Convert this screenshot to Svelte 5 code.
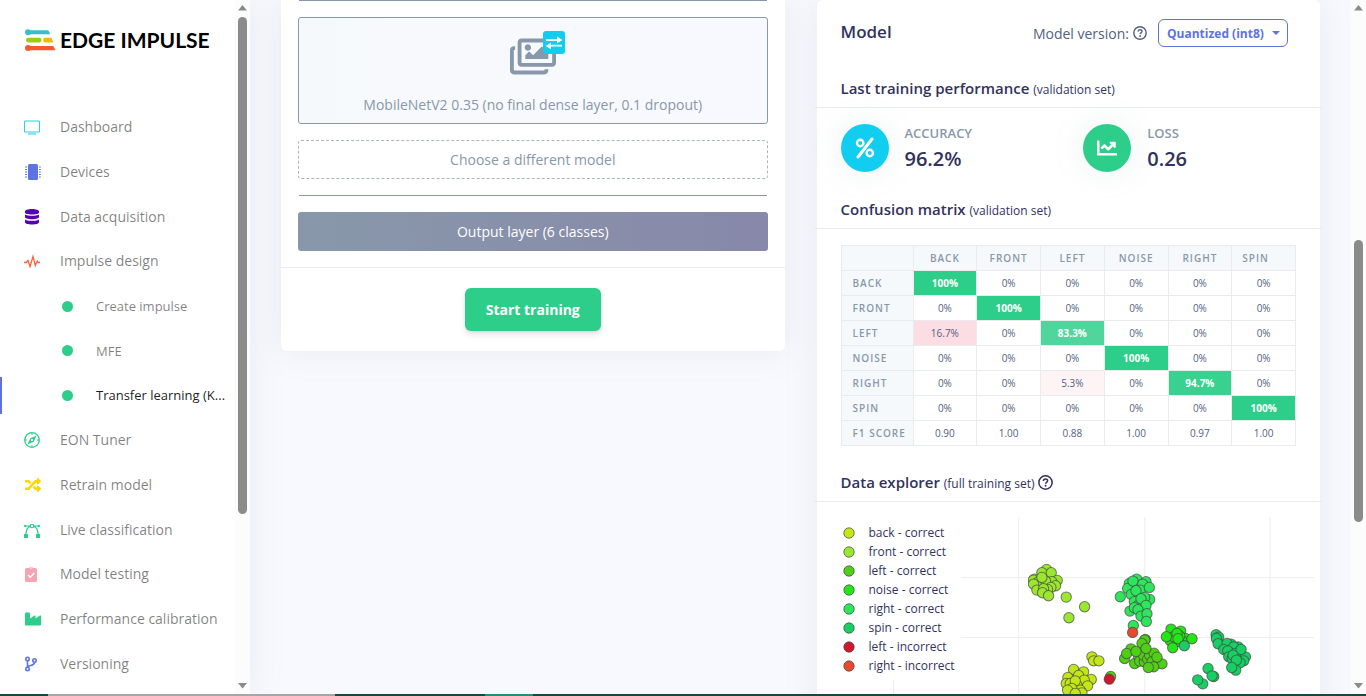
<script>
  const nav = [
    { label: 'Dashboard', icon: 'screen', color: '#2dcef0' },
    { label: 'Devices', icon: 'chip', color: '#5e72e4' },
    { label: 'Data acquisition', icon: 'database', color: '#5603ad' },
    { label: 'Impulse design', icon: 'pulse', color: '#fb6340' },
    { label: 'Create impulse', sub: true },
    { label: 'MFE', sub: true },
    { label: 'Transfer learning (K...', sub: true, active: true },
    { label: 'EON Tuner', icon: 'compass', color: '#2dce89' },
    { label: 'Retrain model', icon: 'shuffle', color: '#ffd600' },
    { label: 'Live classification', icon: 'vector', color: '#2dce89' },
    { label: 'Model testing', icon: 'clipboard', color: '#f3a4b5' },
    { label: 'Performance calibration', icon: 'factory', color: '#2dce89' },
    { label: 'Versioning', icon: 'branch', color: '#5e72e4' }
  ];

  const classes = ['Back', 'Front', 'Left', 'Noise', 'Right', 'Spin'];
  const matrix = [
    [100, 0, 0, 0, 0, 0],
    [0, 100, 0, 0, 0, 0],
    [16.7, 0, 83.3, 0, 0, 0],
    [0, 0, 0, 100, 0, 0],
    [0, 0, 5.3, 0, 94.7, 0],
    [0, 0, 0, 0, 0, 100]
  ];
  const f1 = ['0.90', '1.00', '0.88', '1.00', '0.97', '1.00'];

  function shade(value, hit) {
    if (value === 0) return 'transparent';
    return hit ? `rgba(45, 206, 137, ${value / 100})` : `rgba(245, 54, 92, ${value / 100})`;
  }

  // Point coordinates are in thirds of a chart unit.
  const series = [
    { name: 'back - correct', color: '#c3e617', points: [[245,440],[250,452],[266,452],[190,478],[220,485],[173,502],[205,496],[243,508],[168,520],[180,520],[222,510],[232,527],[200,525],[195,512],[210,540],[185,535],[172,540],[215,548],[195,550]] },
    { name: 'front - correct', color: '#9be62e', points: [[109,178],[95,188],[123,188],[73,207],[70,210],[141,211],[85,215],[125,215],[106,213],[95,202],[136,227],[70,222],[80,240],[122,232],[112,238],[100,236],[97,248],[115,257],[168,261],[223,290],[176,323]] },
    { name: 'left - correct', color: '#50cf17', points: [[405,388],[403,390],[395,400],[362,416],[343,445],[373,460],[385,440],[388,453],[402,455],[400,436],[412,447],[418,435],[431,429],[425,455],[445,458],[455,461],[440,441],[430,470],[414,472],[407,415],[349,430],[377,424],[301,499]] },
    { name: 'noise - correct', color: '#24e617', points: [[482,357],[511,363],[525,385],[480,392],[515,392],[500,395],[490,380],[508,378],[500,370],[468,380],[545,386],[503,386],[487,413]] },
    { name: 'right - correct', color: '#2ee65c', points: [[379,207],[407,215],[357,220],[352,235],[397,222],[368,213],[390,240],[417,232],[363,253],[377,242],[330,260],[418,268],[403,262],[372,275],[385,285],[392,266],[359,303],[372,293],[400,298],[407,286],[383,299],[392,318],[410,311],[408,334],[369,346]] },
    { name: 'spin - correct', color: '#17cf62', points: [[522,407],[617,374],[625,381],[618,385],[623,401],[662,402],[650,400],[640,418],[683,410],[670,410],[652,422],[705,440],[700,452],[675,430],[692,418],[655,440],[665,445],[668,435],[689,458],[676,480],[678,450],[664,472],[593,475],[610,499],[605,497],[577,521],[562,509]] },
    { name: 'left - incorrect', color: '#d0172b', points: [[297,507]] },
    { name: 'right - incorrect', color: '#e64a2e', points: [[367,367]] }
  ];
</script>

{#snippet icon(name)}
  <svg class="icon" viewBox="0 0 16 16" aria-hidden="true" fill="currentColor">
    {#if name === 'screen'}
      <path d="M.5 2h15v11H.5z" fill="none" stroke="currentColor" /><path d="M4 14.4h8v1.1H4z" />
    {:else if name === 'chip'}
      <rect x="4" y="0" width="10" height="16" rx="1.5" />
      <path d="M1 2.5h2v1H1zM1 5h2v1H1zM1 7.5h2v1H1zM1 10h2v1H1zM1 12.5h2v1H1zM15 2.5h1.8v1H15zM15 5h1.8v1H15zM15 7.5h1.8v1H15zM15 10h1.8v1H15zM15 12.5h1.8v1H15z" />
    {:else if name === 'database'}
      <path d="M1 2.3C1 1 4 0 8 0s7 1 7 2.3v1.1C15 4.700 12 5.400 8 5.400S1 4.700 1 3.400zM1 5.400C3 6.600 5.500 6.700 8 6.700s5-.1 7-1.300v2.700c0 1.300-3 2.200-7 2.200S1 9.400 1 8.100zM1 10.400c2 1.200 4.500 1.400 7 1.400s5-.2 7-1.400v2.800C15 14.500 12 15.500 8 15.500S1 14.500 1 13.200z" />
    {:else if name === 'pulse'}
      <path d="M0 9.500h2.500L4 7.500l2 6L9 3.500l2.300 9 2-4.500 1 1.500H16" fill="none" stroke="currentColor" stroke-width="1.300" />
    {:else if name === 'compass'}
      <circle cx="8" cy="8" r="7.300" fill="none" stroke="currentColor" stroke-width="1.300" />
      <path fill-rule="evenodd" d="M12.600 3.400 9.700 9.700 3.400 12.600l2.900-6.300zM8 6.800a1.200 1.200 0 1 0 0 2.400 1.200 1.200 0 0 0 0-2.400z" />
      <path d="M8 1v2M8 13v2M1 8h2M13 8h2" stroke="currentColor" />
    {:else if name === 'shuffle'}
      <g transform="translate(1) scale(.03125)"><path d="M504.971 359.029c9.373 9.373 9.373 24.569 0 33.941l-80 79.984c-15.010 15.010-40.971 4.490-40.971-16.971V416h-58.785a12.004 12.004 0 0 1-8.773-3.812l-70.556-75.596 53.333-57.143L352 336h32v-39.981c0-21.438 25.943-31.998 40.971-16.971l80 79.981zM12 176h84l52.781 56.551 53.333-57.143-70.556-75.596A11.999 11.999 0 0 0 122.785 96H12c-6.627 0-12 5.373-12 12v56c0 6.627 5.373 12 12 12zm372 0v39.984c0 21.460 25.961 31.980 40.971 16.971l80-79.984c9.373-9.373 9.373-24.569 0-33.941l-80-79.981C409.943 24.021 384 34.582 384 56.019V96h-58.785a12.004 12.004 0 0 0-8.773 3.812L96 336H12c-6.627 0-12 5.373-12 12v56c0 6.627 5.373 12 12 12h110.785c3.326 0 6.503-1.381 8.773-3.812L352 176h32z" /></g>
    {:else if name === 'vector'}
      <path d="M0 12h4v4H0zM12 12h4v4h-4z" />
      <path d="M2 12c0-4 2-7 4.500-7.700M14 12c0-4-2-7-4.500-7.700M1 4h5.500M9.500 4H15" fill="none" stroke="currentColor" stroke-width="1.200" />
      <path d="M6.500 2.600h3v3h-3z" fill="#fff" stroke="currentColor" />
      <circle cx="1.200" cy="4" r="1.200" /><circle cx="14.800" cy="4" r="1.200" />
    {:else if name === 'clipboard'}
      <path fill-rule="evenodd" d="M2.500 2H5a2.200 2.200 0 0 1 4 0h2.500A1.500 1.500 0 0 1 13 3.500v11a1.500 1.500 0 0 1-1.500 1.500h-9A1.500 1.500 0 0 1 1 14.500v-11A1.500 1.500 0 0 1 2.500 2zM7 1.200a.8.8 0 1 0 0 1.600.8.8 0 0 0 0-1.600z" />
      <path d="m4 9 2.200 2.200L10.400 7" fill="none" stroke="#fff" stroke-width="1.600" />
    {:else if name === 'factory'}
      <path d="M1 2.500A1 1 0 0 1 2 1.500h3a1 1 0 0 1 1 1v5l4.500-2.900a.6.600 0 0 1 1 .5v2.400L16 4.600a.6.600 0 0 1 1 .5v8.400a1 1 0 0 1-1 1H2a1 1 0 0 1-1-1z" />
    {:else if name === 'branch'}
      <g fill="none" stroke="currentColor" stroke-width="1.600"><circle cx="3.500" cy="3" r="1.700" /><circle cx="3.500" cy="13" r="1.700" /><circle cx="10.500" cy="4.500" r="1.700" /><path d="M3.500 4.700v6.600M10.500 6.200c0 3.600-3.500 2.800-6.800 4.300" /></g>
    {/if}
  </svg>
{/snippet}

{#snippet help()}
  <svg class="help" viewBox="0 0 14 14" role="img" aria-label="Help">
    <circle cx="7" cy="7" r="6.200" fill="none" stroke="currentColor" stroke-width="1.400" />
    <path d="M5 5.600C5.100 4.300 6 3.700 7 3.700c1.200 0 2 .7 2 1.700 0 1.400-1.900 1.400-1.900 2.700" fill="none" stroke="currentColor" stroke-width="1.400" />
    <circle cx="7.100" cy="10" r=".9" fill="currentColor" />
  </svg>
{/snippet}

{#snippet scrollbar(before, thumb, after)}
  <div class="scrollbar" aria-hidden="true">
    <svg viewBox="0 0 9 6"><path d="M4.500 0 9 5.500H0z" /></svg>
    <div class="track">
      <span style="flex-grow: {before}"></span>
      <span class="thumb" style="flex-grow: {thumb}"></span>
      <span style="flex-grow: {after}"></span>
    </div>
    <svg viewBox="0 0 9 6"><path d="M4.500 5.500 9 0H0z" /></svg>
  </div>
{/snippet}

<div class="shell">
  <div class="app">
    <aside>
      <div class="sidebar">
        <a class="brand" href="#home">
          <svg viewBox="0 0 31 23" aria-hidden="true">
            <circle cx="3" cy="3.300" r="3" fill="#3bbdce" /><path d="M3 1.200h19.500q1 0 1.400 1l1.300 3H3z" fill="#3bbdce" />
            <rect x="1" y="8.800" width="15.500" height="4.600" rx="2.300" fill="#a1cb0e" />
            <path d="M20.500 8.800h5q1 0 1.400 1l1.500 3.600h-8a2.300 2.300 0 0 1 0-4.600z" fill="#ffb506" />
            <circle cx="3" cy="19" r="3" fill="#fc572f" /><path d="M3 17h24.500q1 0 1.400 1l1.600 3.200H3z" fill="#fc572f" />
          </svg>
          <span>EDGE IMPULSE</span>
        </a>
        <nav>
          {#each nav as item}
            <a href="#{item.label}" class:sub={item.sub} class:active={item.active}>
              {#if item.sub}
                <i class="dot"></i>
              {:else}
                <i style="color: {item.color}">{@render icon(item.icon)}</i>
              {/if}
              <span>{item.label}</span>
            </a>
          {/each}
        </nav>
      </div>
      {@render scrollbar(0, 497, 163)}
    </aside>

    <main>
      <section class="card network">
        <div class="layers">
          <hr />
          <div class="layer">
            <div class="picture">
              <svg class="images" viewBox="0 0 576 512" aria-hidden="true"><path d="M480 416v16c0 26.510-21.490 48-48 48H48c-26.510 0-48-21.490-48-48V176c0-26.510 21.490-48 48-48h16v48H54a6 6 0 0 0-6 6v244a6 6 0 0 0 6 6h372a6 6 0 0 0 6-6v-10h48zm42-336H150a6 6 0 0 0-6 6v244a6 6 0 0 0 6 6h372a6 6 0 0 0 6-6V86a6 6 0 0 0-6-6zm6-48c26.510 0 48 21.490 48 48v256c0 26.510-21.490 48-48 48H144c-26.510 0-48-21.490-48-48V80c0-26.510 21.490-48 48-48h384zM264 144c0 22.091-17.909 40-40 40s-40-17.909-40-40 17.909-40 40-40 40 17.909 40 40zm-72 96l39.515-39.515c4.686-4.686 12.284-4.686 16.971 0L288 240l103.515-103.515c4.686-4.686 12.284-4.686 16.971 0L480 208v80H192v-48z" /></svg>
              <svg class="swap" viewBox="0 0 22 23" aria-hidden="true"><rect width="22" height="23" rx="3" fill="#11cdef" /><path d="M3 8.200h11V5.500L19.500 9 14 12.200v-2.200H3zM19 13.800H8v-2.200L2.500 15 8 18.200v-2.600h11z" fill="#fff" /></svg>
            </div>
            <p>MobileNetV2 0.35 (no final dense layer, 0.1 dropout)</p>
          </div>
          <button class="choose" type="button">Choose a different model</button>
          <hr />
          <div class="output">Output layer (6 classes)</div>
        </div>
        <footer><button class="train" type="button">Start training</button></footer>
      </section>

      <section class="card">
        <header>
          <h1>Model</h1>
          <div class="version">
            <label for="version">Model version:</label>
            {@render help()}
            <div class="select">
              <select id="version"><option>Quantized (int8)</option></select>
              <svg viewBox="0 0 8 4" aria-hidden="true"><path d="M0 0h8L4 4z" fill="currentColor" /></svg>
            </div>
          </div>
        </header>

        <h2>Last training performance <small>(validation set)</small></h2>
        <div class="stats">
          <div class="stat">
            <div class="badge info">
              <svg viewBox="0 0 20 22" fill="none" stroke="#fff" stroke-width="2.400" aria-hidden="true"><circle cx="5.200" cy="6" r="3.200" /><circle cx="14.800" cy="16" r="3.200" /><path d="M17 2 3 20" stroke-width="3" stroke-linecap="round" /></svg>
            </div>
            <dl><dt>ACCURACY</dt><dd>96.2%</dd></dl>
          </div>
          <div class="stat">
            <div class="badge success">
              <svg viewBox="0 0 512 512" fill="#fff" aria-hidden="true"><path d="M496 384H64V80c0-8.840-7.160-16-16-16H16C7.160 64 0 71.160 0 80v336c0 17.670 14.330 32 32 32h464c8.840 0 16-7.160 16-16v-32c0-8.840-7.160-16-16-16zM464 96H345.940c-21.380 0-32.090 25.850-16.970 40.970l32.400 32.400L288 242.750l-73.370-73.370c-12.500-12.500-32.760-12.500-45.250 0l-68.690 68.690c-6.250 6.250-6.250 16.380 0 22.630l22.620 22.620c6.250 6.250 16.380 6.250 22.630 0L192 237.250l73.370 73.370c12.500 12.500 32.760 12.500 45.250 0l96-96 32.400 32.400c15.120 15.120 40.970 4.410 40.970-16.970V112c.01-8.840-7.150-16-15.990-16z" /></svg>
            </div>
            <dl><dt>LOSS</dt><dd>0.26</dd></dl>
          </div>
        </div>

        <h2>Confusion matrix <small>(validation set)</small></h2>
        <table>
          <thead>
            <tr><th></th>{#each classes as name}<th scope="col">{name}</th>{/each}</tr>
          </thead>
          <tbody>
            {#each matrix as row, r}
              <tr>
                <th scope="row">{classes[r]}</th>
                {#each row as value, c}
                  <td class:hit={r === c} style="background-color: {shade(value, r === c)}">{value}%</td>
                {/each}
              </tr>
            {/each}
            <tr><th scope="row">F1 score</th>{#each f1 as score}<td>{score}</td>{/each}</tr>
          </tbody>
        </table>

        <h2>Data explorer <small>(full training set)</small> {@render help()}</h2>
        <div class="explorer">
          <svg class="plot" viewBox="0 0 473 320" role="img" aria-label="Data explorer">
            <path d="M52.500 0v320M177.500 0v320M303.500 0v320M428.500 0v320M0 60.500h473M0 120.500h473M0 180.500h473M0 240.500h473" stroke="#eee" />
            <g transform="translate(169 -7) scale(.33333)">
              {#each series as group}
                {#each group.points as [x, y]}
                  <circle cx={x} cy={y} r="15.500" fill={group.color} />
                {/each}
              {/each}
            </g>
          </svg>
          <ul>
            {#each series as group}
              <li>
                <svg viewBox="0 0 12 12" aria-hidden="true"><circle cx="6" cy="6" r="5.200" fill={group.color} /></svg>
                {group.name}
              </li>
            {/each}
          </ul>
        </div>
      </section>
    </main>

    {@render scrollbar(223, 282, 155)}
  </div>
  <div class="strip"></div>
</div>

<style>
  :global(body) {
    margin: 0;
    background: #f8f9fe;
    font-family: "Open Sans", sans-serif;
    color: #525f7f;
  }
  * { box-sizing: border-box; }
  a { text-decoration: none; }
  h1, h2, p, dl, dd, ul { margin: 0; padding: 0; }
  button, select { font-family: inherit; cursor: pointer; }

  .shell { display: flex; flex-direction: column; height: 100vh; overflow: hidden; }
  .app { display: grid; grid-template-columns: 250px 1fr 15px; flex: 1; min-height: 0; }
  .strip {
    height: 2px;
    background: linear-gradient(90deg, #14493b 48px, #a6a6a6 48px 335px, #14493b 335px 485px, #2b8c78 485px 533px, #14493b 533px);
  }

  aside { display: flex; min-height: 0; background: #fff; box-shadow: 0 0 32px rgba(136, 152, 170, .15); }
  .sidebar { display: flex; flex-direction: column; flex: 1; min-width: 0; padding-bottom: 8px; }
  .brand { display: flex; align-items: center; gap: 4px; height: 80px; margin-bottom: 25px; padding-left: 25px; color: #000; font: 700 21px/28px Lato, sans-serif; white-space: nowrap; }
  .brand svg { flex: none; width: 31px; height: 23px; }
  nav { display: grid; grid-template-columns: minmax(0, 1fr); grid-auto-rows: 1fr; flex: 1; align-items: center; }
  nav a { display: flex; align-items: center; gap: 20px; height: 37px; padding: 0 8px 0 24px; color: rgba(0, 0, 0, .5); font-size: 14px; line-height: 20px; }
  nav i { display: flex; flex: none; width: 16px; }
  nav span { white-space: nowrap; }
  .icon { width: 16px; height: 16px; overflow: visible; }
  nav .sub { gap: 23px; padding-left: 62px; font-size: 13px; }
  nav .dot { width: 11px; height: 11px; border-radius: 50%; background: #2dce89; }
  nav .active { padding-left: 60px; border-left: 2px solid #5e72e4; color: rgba(0, 0, 0, .9); }

  .scrollbar { display: flex; flex-direction: column; align-items: center; flex: none; width: 15px; min-height: 0; padding: 5px 0; background: #fcfcfc; }
  .scrollbar svg { flex: none; width: 9px; height: 6px; fill: #8b8b8b; }
  .track { display: flex; flex: 1; flex-direction: column; width: 9px; margin: 6px 0; }
  .thumb { border-radius: 5px; background: #8b8b8b; }

  main { display: grid; grid-template-columns: 1fr 1fr; gap: 32px; align-items: start; min-width: 0; min-height: 0; padding: 0 31px; overflow: hidden; }
  .card { min-width: 0; border-radius: 6px; background: #fff; box-shadow: 0 0 32px rgba(136, 152, 170, .15); }
  .network { border-radius: 0 0 6px 6px; }
  .layers { display: flex; flex-direction: column; gap: 16px; padding: 0 17px 16px; font-size: 14px; line-height: 20px; text-align: center; }
  hr { width: calc(100% - 2px); height: 1px; margin: 0 auto; border: 0; background: #8898aa; }
  .layer { display: flex; flex-direction: column; align-items: center; justify-content: space-between; height: 107px; padding: 13px 16px 8px; border: 1px solid #8898aa; border-radius: 3px; background: linear-gradient(87deg, #f5f9fc, #f7f9fd 25%, #f8f9fe); color: #8898aa; }
  .picture { position: relative; width: 46px; height: 46px; }
  .images { width: 46px; height: 41px; margin-top: 5px; fill: #8898aa; }
  .swap { position: absolute; top: 0; right: -9px; width: 22px; height: 23px; }
  .choose { height: 39px; border: 1px dashed #adb5bd; border-radius: 3px; background: #fff; color: #8898aa; font-size: 14px; }
  .output { height: 39px; line-height: 39px; border-radius: 3px; background: linear-gradient(87deg, #8898aa, #8888aa); color: #fff; }
  footer { display: flex; justify-content: center; padding: 20px; border-top: 1px solid #e9ecef; }
  .train { height: 43px; padding: 0 21px; border: 0; border-radius: 6px; background: #2dce89; box-shadow: 0 4px 6px rgba(50, 50, 93, .11), 0 1px 3px rgba(0, 0, 0, .08); color: #fff; font-size: 14px; font-weight: 700; }

  header { display: flex; justify-content: space-between; align-items: flex-start; padding: 19px 32px 30px 24px; }
  h1 { color: #32325d; font-size: 17px; line-height: 26px; font-weight: 600; }
  .version { display: flex; align-items: center; gap: 4px; font-size: 14px; }
  .help { width: 14px; height: 14px; }
  .select { position: relative; margin-left: 7px; color: #5e72e4; }
  .select svg { position: absolute; top: 12px; right: 8px; width: 8px; height: 4px; pointer-events: none; }
  select { display: block; width: 130px; height: 28px; padding: 0 20px 0 8px; border: 1px solid #5e72e4; border-radius: 6px; appearance: none; background: #fff; color: #5e72e4; font-size: 12px; font-weight: 700; }

  h2 { margin: 0 -3px; padding: 0 27px 8px; border-bottom: 1px solid #e9ecef; color: #32325d; font-size: 15px; line-height: 22px; font-weight: 600; }
  h2 small { font-size: 12px; line-height: 1; font-weight: 400; }
  h2 .help { width: 15px; height: 15px; vertical-align: -2px; }
  .stats { display: grid; grid-template-columns: 1fr 1fr; gap: 6px; padding: 16px 0 26px 24px; }
  .stat { display: flex; align-items: center; gap: 16px; }
  .badge { display: flex; align-items: center; justify-content: center; width: 48px; height: 48px; border-radius: 50%; box-shadow: 0 0 32px rgba(136, 152, 170, .15); }
  .badge svg { width: 20px; height: 22px; }
  .info { background: #11cdef; }
  .success { background: #2dce89; }
  dl { display: grid; gap: 4px; }
  dt { color: #8898aa; font-size: 13px; line-height: 18px; font-weight: 600; }
  dd { color: #32325d; font-size: 20px; line-height: 26px; font-weight: 600; }

  table { width: calc(100% - 48px); margin: 16px 24px 25px; table-layout: fixed; border-collapse: collapse; }
  th, td { height: 25px; padding: 0; border: 1px solid #e9ecef; font-size: 10px; line-height: 16px; text-align: center; }
  th { background: #f6f9fc; color: #8898aa; font-weight: 600; letter-spacing: 1px; text-transform: uppercase; }
  th:first-child { width: 72px; padding-left: 11px; text-align: left; white-space: nowrap; }
  thead th:last-child { padding-left: 10px; text-align: left; }
  .hit { color: #fff; font-weight: 700; }

  .explorer { position: relative; margin: 15px 6px 24px 24px; }
  .plot { display: block; width: 100%; }
  .plot circle { stroke: #444; stroke-opacity: .7; stroke-width: 3; }
  .explorer ul { position: absolute; top: 0; left: 0; padding: 6px 6px 5px 2px; background: #fff; color: #32325d; font-size: 12px; line-height: 19px; list-style: none; }
  li { display: flex; align-items: center; gap: 14px; white-space: nowrap; }
  li svg { width: 12px; height: 12px; stroke: #444; stroke-opacity: .7; }
</style>
